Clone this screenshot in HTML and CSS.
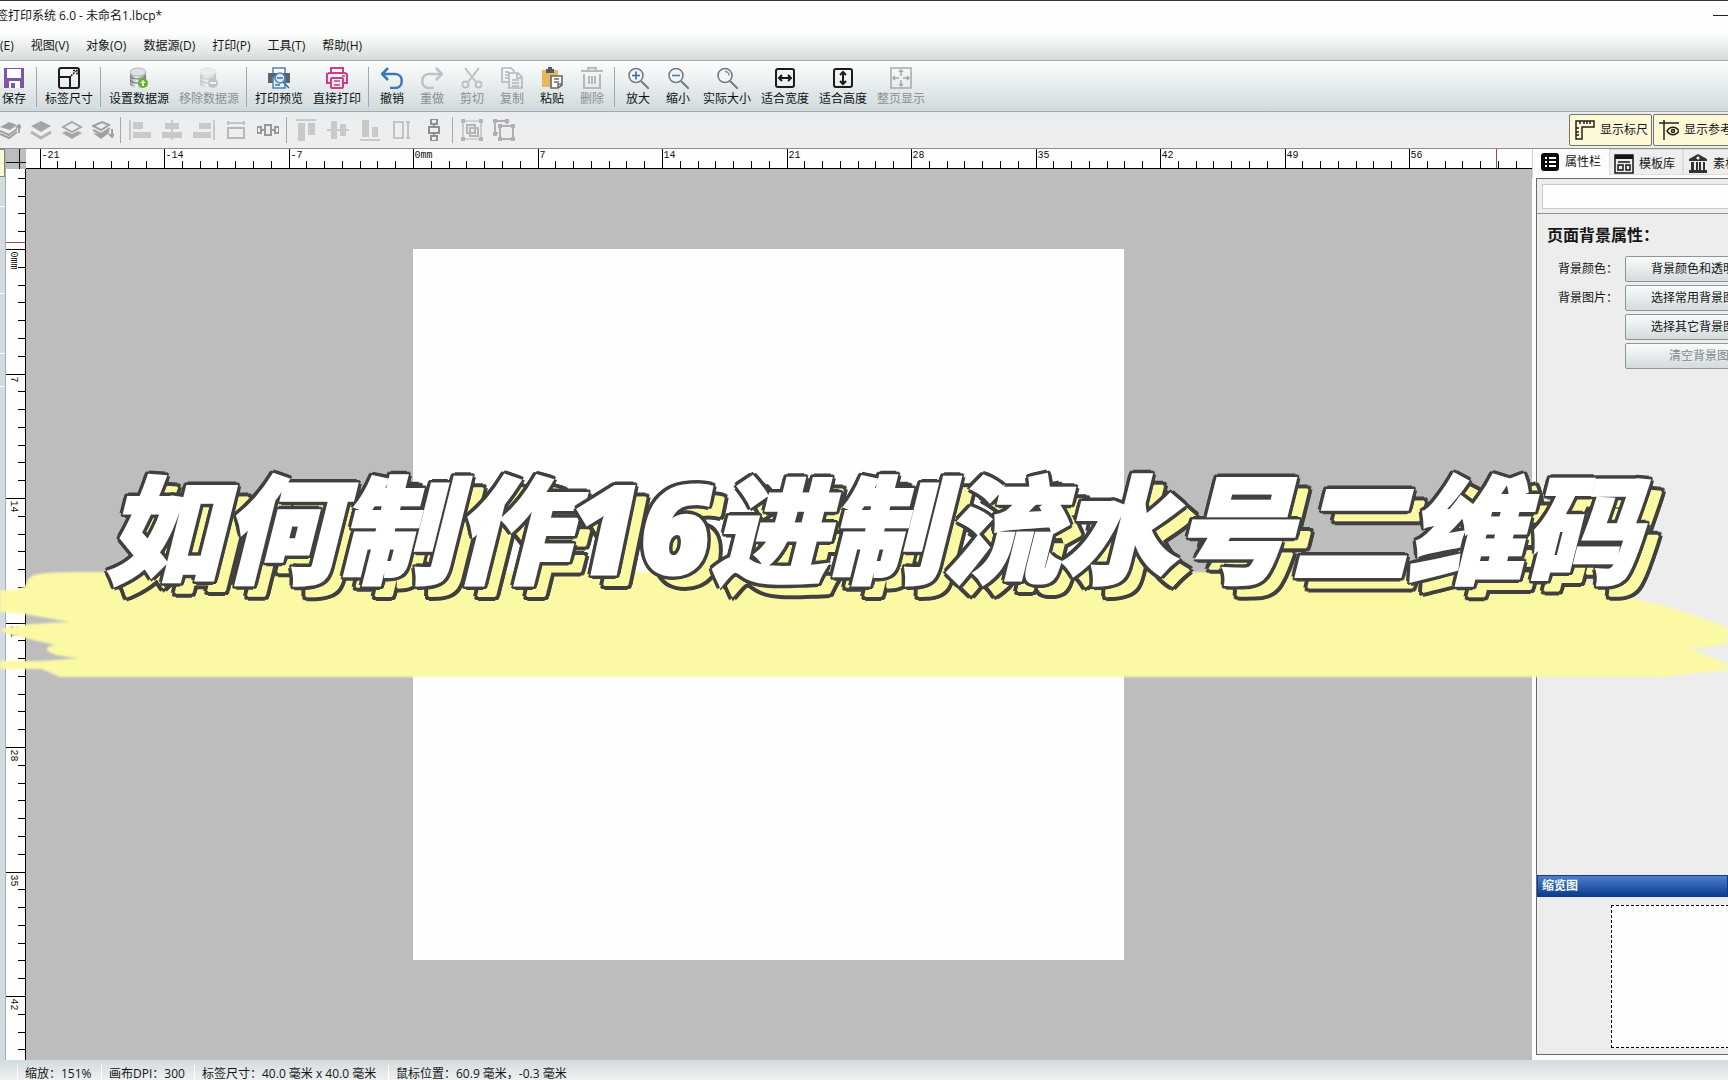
FILE: index.html
```html
<!DOCTYPE html>
<html lang="zh-CN">
<head>
<meta charset="utf-8">
<title>标签打印系统 6.0 - 未命名1.lbcp*</title>
<link rel="stylesheet" href="styles.css">
</head>
<body>
<svg width="0" height="0" class="defs" aria-hidden="true">
  <defs>
    <linearGradient id="metal" x1="0" x2="1" y1="0" y2="0"><stop offset="0" stop-color="#8a9096"/><stop offset=".4" stop-color="#eef0f2"/><stop offset="1" stop-color="#80868c"/></linearGradient>
    <symbol id="i-db" viewBox="0 0 22 22"><path d="M2 5v12c0 5 16 5 16 0V5z" fill="url(#metal)"/><path d="M2 9c2 4 14 4 16 0M2 13c2 4 14 4 16 0" fill="none" stroke="#666c72"/><ellipse cx="10" cy="5" rx="8" ry="4" fill="#dfe2e4" stroke="#b5babd"/></symbol>
    <symbol id="i-lens" viewBox="0 0 22 22"><circle cx="9" cy="8.500" r="7" fill="#f1f5f7" stroke="#747b80" stroke-width="1.600"/><path d="M14 14l8 8" stroke="#747b80" stroke-width="2"/></symbol>
  </defs>
</svg>
<div class="app">
  <header class="titlebar"><span class="title">签打印系统 6.0 - 未命名1.lbcp*</span><button class="minimize" aria-label="最小化"></button></header>
  <nav class="menubar">
    <button>(E)</button><button>视图(V)</button><button>对象(O)</button><button>数据源(D)</button><button>打印(P)</button><button>工具(T)</button><button>帮助(H)</button>
  </nav>
  <div class="toolbar">
    <button class="tool"><svg viewBox="0 0 22 22"><path d="M1 1h20v20H1z" fill="#7d55a4"/><path d="M4 2h14v9H4z" fill="#fff"/><path d="M6 14h11v7H6z" fill="#fff"/><path d="M8 16h4v5H8z" fill="#7d55a4"/></svg>保存</button>
    <i class="sep"></i>
    <button class="tool four"><svg viewBox="0 0 22 22" fill="none" stroke="#1d1d1d" stroke-width="2"><rect x="1" y="1" width="20" height="20" rx="2"/><path d="M1 10h11v11"/><path d="M13 9l5-5M15 3.500h4v4" stroke-dasharray="2 1" stroke-width="1.500"/></svg>标签尺寸</button>
    <i class="sep"></i>
    <button class="tool five"><svg viewBox="0 0 22 22"><use href="#i-db"/><circle cx="15" cy="16" r="5" fill="#5eb52d"/><path d="M15 13l3 3h-2v3h-2v-3h-2z" fill="#efffd8"/></svg>设置数据源</button>
    <button class="tool five" disabled><svg viewBox="0 0 22 22" opacity=".35"><use href="#i-db"/><circle cx="15" cy="16" r="5" fill="#777"/><path d="M12 15h6v2h-6z" fill="#fff"/></svg>移除数据源</button>
    <i class="sep"></i>
    <button class="tool four"><svg viewBox="0 0 22 22"><path d="M5 1h12v6H5z" fill="#fff" stroke="#4a84b8" stroke-width="1.500"/><path d="M0 6h22v10H0z" fill="#5b646c"/><path d="M5 10h12v11H5z" fill="#e8f1f8" stroke="#4a84b8" stroke-width="1.500"/><circle cx="12" cy="11" r="5" fill="#dcebf6" stroke="#4a84b8" stroke-width="1.600"/><path d="M15 15l6 6M9 11h6M7 18h5" stroke="#4a6d90" stroke-width="1.600"/></svg>打印预览</button>
    <button class="tool four"><svg viewBox="0 0 22 22" fill="none" stroke="#d43b83" stroke-width="2"><path d="M5 6V1h12v5M5 16H1V7l2-1h16l2 1v9h-4"/><rect x="5" y="11" width="12" height="10" rx="1"/><path d="M8 14h6M8 18h6M16 9h3" stroke-width="1.500"/></svg>直接打印</button>
    <i class="sep"></i>
    <button class="tool"><svg viewBox="0 0 22 22" fill="none" stroke="#3d78b5" stroke-width="2.500"><path d="M7 1L1 7l6 6M2 7h12c9 0 9 14 0 14H9"/></svg>撤销</button>
    <button class="tool" disabled><svg viewBox="0 0 22 22" fill="none" stroke="#bdc1c3" stroke-width="2.500"><path d="M15 1l6 6-6 6M20 7H8c-9 0-9 14 0 14h5"/></svg>重做</button>
    <button class="tool" disabled><svg viewBox="0 0 22 22" fill="none" stroke="#bdc1c3" stroke-width="2"><path d="M4 1l11 14M18 1L7 15"/><circle cx="4.500" cy="17.500" r="3"/><circle cx="17.500" cy="17.500" r="3"/></svg>剪切</button>
    <button class="tool" disabled><svg viewBox="0 0 22 22" fill="none" stroke="#b3b7b9" stroke-width="1.600"><path d="M8 15H1V1h9l3 3v1M8 6h9l4 4v11H8zM16 6v5h5M4 5h4M4 8h3M4 11h3M11 13h7M11 16h7M11 19h7"/></svg>复制</button>
    <button class="tool"><svg viewBox="0 0 22 22"><path d="M1 3h16v17H1z" fill="#e5b95e"/><path d="M5 2h2V0h4v2h2v4H5z" fill="#55585c"/><path d="M10 9h11v9l-4 3h-7z" fill="#fff" stroke="#64696e" stroke-width="1.600"/><path d="M13 12h5M13 15h5M21 17h-4v4" fill="none" stroke="#64696e" stroke-width="1.500"/></svg>粘贴</button>
    <button class="tool" disabled><svg viewBox="0 0 22 22" fill="none" stroke="#b5b9bb" stroke-width="2"><path d="M0 4h22M7 4V1h8v3M3 7v14h16V7M8 9v8M11 9v8M14 9v8"/></svg>删除</button>
    <i class="sep"></i>
    <button class="tool"><svg viewBox="0 0 22 22"><use href="#i-lens"/><path d="M5 8.500h8M9 4.500v8" stroke="#2f6db0" stroke-width="1.600"/></svg>放大</button>
    <button class="tool"><svg viewBox="0 0 22 22"><use href="#i-lens"/><path d="M5 8.500h8" stroke="#4f7fae" stroke-width="1.600"/></svg>缩小</button>
    <button class="tool four"><svg viewBox="0 0 22 22"><use href="#i-lens"/><path d="M9 4.500a4 4 0 0 1 4 4" fill="none" stroke="#6f91b2" stroke-width="1.500"/></svg>实际大小</button>
    <button class="tool four"><svg viewBox="0 0 22 22" fill="none" stroke="#1b1b1b" stroke-width="2"><rect x="2" y="2" width="18" height="18" rx="2"/><path d="M5 11h12M8 8l-3 3 3 3M14 8l3 3-3 3"/></svg>适合宽度</button>
    <button class="tool four"><svg viewBox="0 0 22 22" fill="none" stroke="#1b1b1b" stroke-width="2"><rect x="2" y="2" width="18" height="18" rx="2"/><path d="M11 5v12M8 8l3-3 3 3M8 14l3 3 3-3"/></svg>适合高度</button>
    <button class="tool four" disabled><svg viewBox="0 0 22 22" fill="none" stroke="#a4a9ab" stroke-width="1.500"><path d="M1 1h20v20H1zM11 3v6M9 5l2-2 2 2M11 19v-6M9 17l2 2 2-2M3 11h6M5 9l-2 2 2 2M19 11h-6M17 9l2 2-2 2"/></svg>整页显示</button>
  </div>
  <div class="arrange">
    <button class="mini narrow" aria-label="上移一层" disabled><svg viewBox="0 0 22 22"><path d="M1 8l9-5 8 3-7 5z" fill="#a0a0a0"/><path d="M1 12l9 4 8-6M1 15l9 4 8-6M20 14V6M17 9l3-3 2 3" fill="none" stroke="#a0a0a0" stroke-width="2"/></svg></button>
    <button class="mini narrow" aria-label="置于顶层" disabled><svg viewBox="0 0 22 22"><path d="M11 2l10 5-10 6L1 7z" fill="#a6a6a6"/><path d="M1 13l10 6 10-6" fill="none" stroke="#b5b5b5" stroke-width="3"/></svg></button>
    <button class="mini narrow" aria-label="置于底层" disabled><svg viewBox="0 0 22 22"><path d="M11 3l9 5-9 5-9-5z" fill="none" stroke="#a6a6a6" stroke-width="2"/><path d="M1 14l4-2 6 3 6-3 4 2-10 6z" fill="#a6a6a6"/></svg></button>
    <button class="mini narrow" aria-label="下移一层" disabled><svg viewBox="0 0 22 22"><path d="M1 7l9-4 7 3-8 5zM1 11l8 4 9-6" fill="none" stroke="#a0a0a0" stroke-width="2"/><path d="M1 14l8 1 8-5v4l-8 6z" fill="#a0a0a0"/><path d="M20 10v8M17 15l3 3 2-3" fill="none" stroke="#a0a0a0" stroke-width="2"/></svg></button>
    <i class="sep"></i>
    <button class="mini" aria-label="左对齐" disabled><svg viewBox="0 0 22 22" fill="#c9c9c9"><path d="M0 1h2v20H0zM4 3h10v7H4zM4 13h18v6H4z"/></svg></button>
    <button class="mini" aria-label="水平居中" disabled><svg viewBox="0 0 22 22" fill="#c9c9c9"><path d="M10 1h2v20h-2zM4 4h14v6H4zM1 13h20v6H1z"/></svg></button>
    <button class="mini" aria-label="右对齐" disabled><svg viewBox="0 0 22 22" fill="#c9c9c9"><path d="M20 1h2v20h-2zM6 4h12v6H6zM0 13h18v6H0z"/></svg></button>
    <button class="mini" aria-label="等宽" disabled><svg viewBox="0 0 22 22" fill="none" stroke="#b8b8b8" stroke-width="2"><path d="M3 9h16v10H3z"/><path d="M3 4h16M3 2v4M19 2v4" stroke-width="1.500"/></svg></button>
    <button class="mini" aria-label="水平等距" disabled><svg viewBox="0 0 22 22" fill="none" stroke="#999" stroke-width="2"><path d="M0 8h4v6H0zM22 8h-4v6h4zM4 11h4M14 11h4M8 6h6v10H8z"/></svg></button>
    <i class="sep"></i>
    <button class="mini" aria-label="顶部对齐" disabled><svg viewBox="0 0 22 22" fill="#c9c9c9"><path d="M1 0h20v2H1zM3 4h7v18H3zM13 4h7v12h-7z"/></svg></button>
    <button class="mini" aria-label="垂直居中" disabled><svg viewBox="0 0 22 22" fill="#c9c9c9"><path d="M0 10h22v2H0zM4 2h6v18H4zM13 5h6v12h-6z"/></svg></button>
    <button class="mini" aria-label="底部对齐" disabled><svg viewBox="0 0 22 22" fill="#c9c9c9"><path d="M1 20h20v2H1zM3 1h7v17H3zM13 8h6v10h-6z"/></svg></button>
    <button class="mini" aria-label="等高" disabled><svg viewBox="0 0 22 22" fill="none" stroke="#b8b8b8" stroke-width="2"><path d="M3 3h9v16H3zM17 3v16M15 3h4M15 19h4" stroke-width="1.600"/></svg></button>
    <button class="mini" aria-label="垂直等距" disabled><svg viewBox="0 0 22 22" fill="none" stroke="#8f8f8f" stroke-width="2"><path d="M8 0h6v5H8zM8 17h6v5H8zM11 5v3M11 14v3M6 8h10v6H6z"/></svg></button>
    <i class="sep"></i>
    <button class="mini" aria-label="组合" disabled><svg viewBox="0 0 22 22" fill="none" stroke="#b5b5b5" stroke-width="2"><path d="M2 2h18v18H2z" stroke-width="1.200"/><path d="M6 6h8v8H6zM9 9h8v8H9z"/><path d="M0 2h4M18 2h4M0 20h4M18 20h4" stroke-width="4"/></svg></button>
    <button class="mini" aria-label="取消组合" disabled><svg viewBox="0 0 22 22" fill="none" stroke="#b0b0b0" stroke-width="2"><path d="M5 14H2V2h12v3M7 7h13v13H7z"/><path d="M0 2h4M12 2h4M0 15h4M5 7h4M18 7h4M5 20h4M18 20h4" stroke-width="4"/></svg></button>
    <div class="toggles">
      <button class="toggle"><svg viewBox="0 0 20 20" fill="none" stroke="#24211b" stroke-width="1.500"><path d="M1 1h18v6H7v12H1zM5 1v3M9 1v3M12 1v3M15 1v3M1 8h3M1 12h3M1 15h3"/></svg>显示标尺</button>
      <button class="toggle"><svg viewBox="0 0 20 20" fill="none" stroke="#24211b" stroke-width="1.500"><path d="M0 3h20M5 0v20M8 11c3-5 9-5 12 0-3 5-9 5-12 0z"/><circle cx="14" cy="11" r="1.500"/></svg>显示参考线</button>
    </div>
  </div>
  <main class="workspace">
    <aside class="dock"><span class="dock-tab"></span><i></i><i></i><i></i><i></i></aside>
    <section class="editor">
      <div class="corner"></div>
      <div class="ruler ruler-h" data-axis="x"></div>
      <div class="ruler ruler-v" data-axis="y"></div>
      <div class="canvas"><div class="page"></div></div>
    </section>
    <aside class="side">
      <div class="tabs">
        <button class="tab active"><svg viewBox="0 0 20 20"><rect x="1" y="1" width="18" height="18" rx="3" fill="#0a0a0a"/><path d="M5 6h2M9 6h7M5 10h2M9 10h7M5 14h2M9 14h7" stroke="#fff" stroke-width="2"/></svg>属性栏</button>
        <button class="tab"><svg viewBox="0 0 20 20" fill="none" stroke="#151515" stroke-width="1.500"><path d="M1 1h18v18H1zM4 8h12M4 11h5v5H4zM12 11h4v5h-4z"/><path d="M1 3h18" stroke-width="4"/></svg>模板库</button>
        <button class="tab"><svg viewBox="0 0 20 20" fill="#333"><path d="M10 0l9 5v2H1V5zM3 8h3v8H3zM8 8h2v8H8zM11 8h2v8h-2zM15 8h2v8h-2zM1 16h18v3H1z"/><circle cx="10" cy="4" r="1.500" fill="#fff"/></svg>素材库</button>
      </div>
      <div class="panel">
        <div class="search"><input type="text" aria-label="对象名称"></div>
        <form class="props">
          <h2>页面背景属性：</h2>
          <div class="prop"><label for="bgcolor">背景颜色：</label><button type="button" id="bgcolor">背景颜色和透明度</button></div>
          <div class="prop"><label for="bgimg">背景图片：</label><button type="button" id="bgimg">选择常用背景图片</button></div>
          <div class="prop"><button type="button">选择其它背景图片</button></div>
          <div class="prop"><button type="button" disabled>清空背景图</button></div>
        </form>
        <h3 class="thumb-title">缩览图</h3>
        <div class="thumb"><div class="thumb-page"></div></div>
      </div>
    </aside>
  </main>
  <footer class="status"><span class="s1">缩放：151%</span><span class="s2">画布DPI：300</span><span class="s3">标签尺寸：40.0 毫米 x 40.0 毫米</span><span>鼠标位置：60.9 毫米，-0.3 毫米</span></footer>
</div>
<div class="banner">
  <svg class="brush" viewBox="0 0 1728 110" preserveAspectRatio="none" aria-hidden="true"><path d="M34 3Q44 0 80 0H1560L1640 28Q1690 40 1728 56V72Q1700 76 1690 77Q1710 84 1728 92V98L1660 105H60L42 97H0V89H40Q60 88 80 86Q50 84 47 78Q46 74 56 73L24 66Q6 62 0 58Q10 52 70 50L24 42L0 40V18Q20 20 26 13Q28 5 34 3Z"/></svg>
  <h1 class="headline">如何制作<span class="num">16</span>进制流水号二维码</h1>
</div>
<script src="rulers.js"></script>
</body>
</html>
```
FILE: styles.css
```css
* { box-sizing: border-box; }
body { margin: 0; overflow: hidden; font: 12px/16px "Open Sans", "Noto Sans CJK SC", sans-serif; color: #161616; }
button, input { font: inherit; color: inherit; margin: 0; padding: 0; border: 0; background: none; white-space: nowrap; }
svg { display: block; }
.defs { position: absolute; }
.app { display: flex; flex-direction: column; height: 100vh; overflow: hidden; background: #ededee; }

.titlebar { display: flex; justify-content: space-between; align-items: center; flex: none; height: 31px; border-top: 1px solid #383338; background: #fefefe; }
.title { margin-left: -4px; }
.minimize { width: 15px; height: 14px; margin-top: 12px; border-top: 1px solid #222; }
.menubar { display: flex; gap: 17px; flex: none; height: 30px; background: linear-gradient(#fefefe 10%, #d4dddb); border-bottom: 1px solid #a9afb0; }

.toolbar { display: flex; flex: none; height: 51px; margin-left: -6px; padding-top: 6px; background: linear-gradient(#fdfefe, #d0dadc); border-bottom: 1px solid #a5a9ab; }
.tool { display: flex; flex-direction: column; align-items: center; gap: 2px; width: 40px; flex: none; color: #111; }
.tool svg { width: 22px; height: 22px; }
.tool.four { width: 58px; }
.tool.five { width: 70px; }
.tool:disabled { color: #8b8f91; }
.sep { flex: none; width: 1px; height: 40px; margin: 0 3px 0 2px; background: #a3a9ab; }

.arrange { display: flex; align-items: center; flex: none; height: 37px; margin-left: -6px; background: linear-gradient(#e9edf0, #eeeeee 50%); border-bottom: 1px solid #8c8e90; }
.arrange .sep { height: 26px; }
.mini { display: grid; place-items: center; width: 32px; height: 32px; flex: none; }
.mini.narrow { width: 31px; }
.mini svg { width: 22px; height: 22px; }
.toggles { display: flex; gap: 1px; width: 159px; margin-left: auto; overflow: hidden; }
.toggle { display: flex; align-items: center; gap: 5px; flex: none; height: 32px; padding: 0 3px 0 5px; border: 1px solid #77766b; border-radius: 2px; background: #fdf8d6; }
.toggle svg { width: 20px; height: 20px; }

.workspace { display: flex; flex: 1; min-height: 0; }
.dock { display: flex; flex-direction: column; flex: none; width: 6px; background: #d2dbde; border-right: 1px solid #a4adb0; }
.dock i { border-bottom: 1px solid #fff; height: 87px; }
.dock i:nth-child(2) { height: 30px; }
.dock i:nth-child(4) { height: 60px; }
.dock i:nth-child(5) { height: 33px; }
.dock-tab { width: 5px; height: 28px; border: 1px solid #85857c; border-left: 0; background: #fdf8d6; }
.editor { display: grid; grid-template: 20px 1fr / 20px 1fr; flex: 1; min-width: 0; }
.corner { background: linear-gradient(90deg, transparent 13px, #111 13px, #111 14px, transparent 14px), linear-gradient(transparent 13px, #111 13px, #111 14px, transparent 14px), #bdbdbd; }
.ruler { overflow: hidden; background: #fefefe; }
.ruler svg { width: 100%; height: 100%; }
.ruler-h { border-bottom: 1px solid #000; }
.ruler-v { border-right: 1px solid #000; }
.ruler path { stroke: #000; fill: none; shape-rendering: crispEdges; }
.ruler .cursor { stroke: #a5454b; }
.ruler text { font: 10px "Liberation Mono", monospace; fill: #111; }
.canvas { overflow: hidden; background: #bdbdbd; padding: 80px 387px; }
.page { width: 711px; height: 711px; background: #fefefe; }

.side { display: flex; flex-direction: column; flex: none; width: 196px; padding: 0 0 5px 4px; background: #fdfdfd; overflow: hidden; }
.tabs { display: flex; flex: none; height: 29px; margin-left: -4px; border-left: 1px solid #cfcfcf; padding-bottom: 3px; overflow: hidden; }
.tab { display: flex; align-items: center; gap: 5px; flex: none; padding: 3px 7px 0 4px; background: #eeeeee; border: 1px solid #dddddd; }
.tab.active { padding: 0 7px 0 6px; background: #fdfdfd; border-color: #fdfdfd; }
.tab svg { width: 20px; height: 20px; }
.panel { display: flex; flex-direction: column; flex: 1; min-height: 0; border: 1px solid #6b6b6b; border-right: 0; background: #ededed; }
.search { flex: none; padding: 5px 0 4px 5px; border-bottom: 1px solid #909090; }
.search input { display: block; width: 190px; height: 25px; border: 1px solid #cccccc; background: #fefefe; }
.props { display: flex; flex-direction: column; gap: 3px; flex: 1; padding: 9px 0 0 10px; }
.props h2 { margin: 0 0 6px; font-size: 16px; line-height: 24px; font-weight: 700; }
.prop { display: flex; align-items: center; justify-content: flex-end; gap: 6px; width: 226px; }
.prop label { width: 61px; }
.prop button { width: 148px; height: 26px; flex: none; border: 1px solid #8f9597; border-radius: 2px; background: linear-gradient(#fafcfc, #d3dbdd); }
.prop button:disabled { color: #85898b; }
.thumb-title { margin: 0; flex: none; padding: 1px 4px; height: 22px; font-size: 12px; line-height: 18px; color: #f0fbff; border: 1px solid #123a80; background: linear-gradient(#4c7fd0, #0e3c8c); }
.thumb { flex: none; padding: 7px 0 6px 74px; border-top: 1px solid #dfe9f6; }
.thumb-page { width: 143px; height: 143px; border: 1px dashed #000; background: #fefefe; }

.status { display: flex; flex: none; height: 20px; padding: 5px 0 0 17px; background: linear-gradient(#d2dbdd, #eef1f1); white-space: nowrap; }
.status span { padding: 1px 7px 0; border-left: 1px solid #fff; }
.status .s1 { width: 84px; }
.status .s2 { width: 93px; }
.status .s3 { width: 194px; }

.banner { position: absolute; inset: 450px 0 auto; display: grid; pointer-events: none; }
.brush { grid-area: 1 / 1; width: 100%; height: 110px; margin-top: 122px; fill: #fcf9a5; filter: blur(1px); }
.headline {
  --ink: #40403e;
  grid-area: 1 / 1; z-index: 1; margin: 0; padding-left: 16px; justify-self: center; white-space: nowrap;
  font: italic 900 116px/146px "Noto Sans CJK SC", sans-serif;
  color: #fff; -webkit-text-stroke: 3px #fff;
  text-shadow: 5px 0 var(--ink), -5px 0 var(--ink), 0 5px var(--ink), 0 -5px var(--ink),
    4px 3px var(--ink), -4px 3px var(--ink), 4px -3px var(--ink), -4px -3px var(--ink),
    3px 4px var(--ink), -3px 4px var(--ink), 3px -4px var(--ink), -3px -4px var(--ink),
    12px 11px #fcf9a5, 13px 11px #fcf9a5, 11px 11px #fcf9a5, 12px 12px #fcf9a5, 12px 10px #fcf9a5,
    17px 11px var(--ink), 7px 11px var(--ink), 12px 16px var(--ink), 12px 6px var(--ink),
    16px 14px var(--ink), 8px 14px var(--ink), 16px 8px var(--ink), 8px 8px var(--ink),
    15px 15px var(--ink), 9px 15px var(--ink), 15px 7px var(--ink), 9px 7px var(--ink);
}
.headline .num { font-family: "Open Sans", sans-serif; font-size: 122px; font-weight: 800; }
```
FILE: rulers.js
```js
// Draws a millimetre scale along each ruler: a labelled mark every 7 mm.
const PX_PER_MM = 124.5 / 7;
const NS = "http://www.w3.org/2000/svg";
const axes = {
  x: { origin: 387, first: -21, last: 62, cursor: 60.9 },
  y: { origin: 80, first: -4, last: 45, cursor: -0.4 }
};

document.querySelectorAll(".ruler").forEach((ruler) => {
  const axis = ruler.dataset.axis;
  const { origin, first, last, cursor } = axes[axis];
  const svg = document.createElementNS(NS, "svg");
  const add = (name, attrs, text = "") => {
    const el = document.createElementNS(NS, name);
    Object.entries(attrs).forEach(([k, v]) => el.setAttribute(k, v));
    el.textContent = text;
    svg.append(el);
  };
  const tick = (pos, from) => axis === "x" ? `M${pos} ${from}V20` : `M${from} ${pos}H20`;
  for (let mm = first; mm <= last; mm++) {
    const pos = Math.round(origin + mm * PX_PER_MM) + 0.5;
    const major = mm % 7 === 0;
    add("path", { d: tick(pos, major ? 0 : 12) });
    if (major) {
      const label = mm === 0 ? "0mm" : String(mm);
      add("text", axis === "x" ? { x: pos + 1, y: 9 } : { transform: `translate(5 ${pos + 2}) rotate(90)` }, label);
    }
  }
  add("path", { class: "cursor", d: tick(Math.round(origin + cursor * PX_PER_MM) + 0.5, 0) });
  ruler.append(svg);
});
```
